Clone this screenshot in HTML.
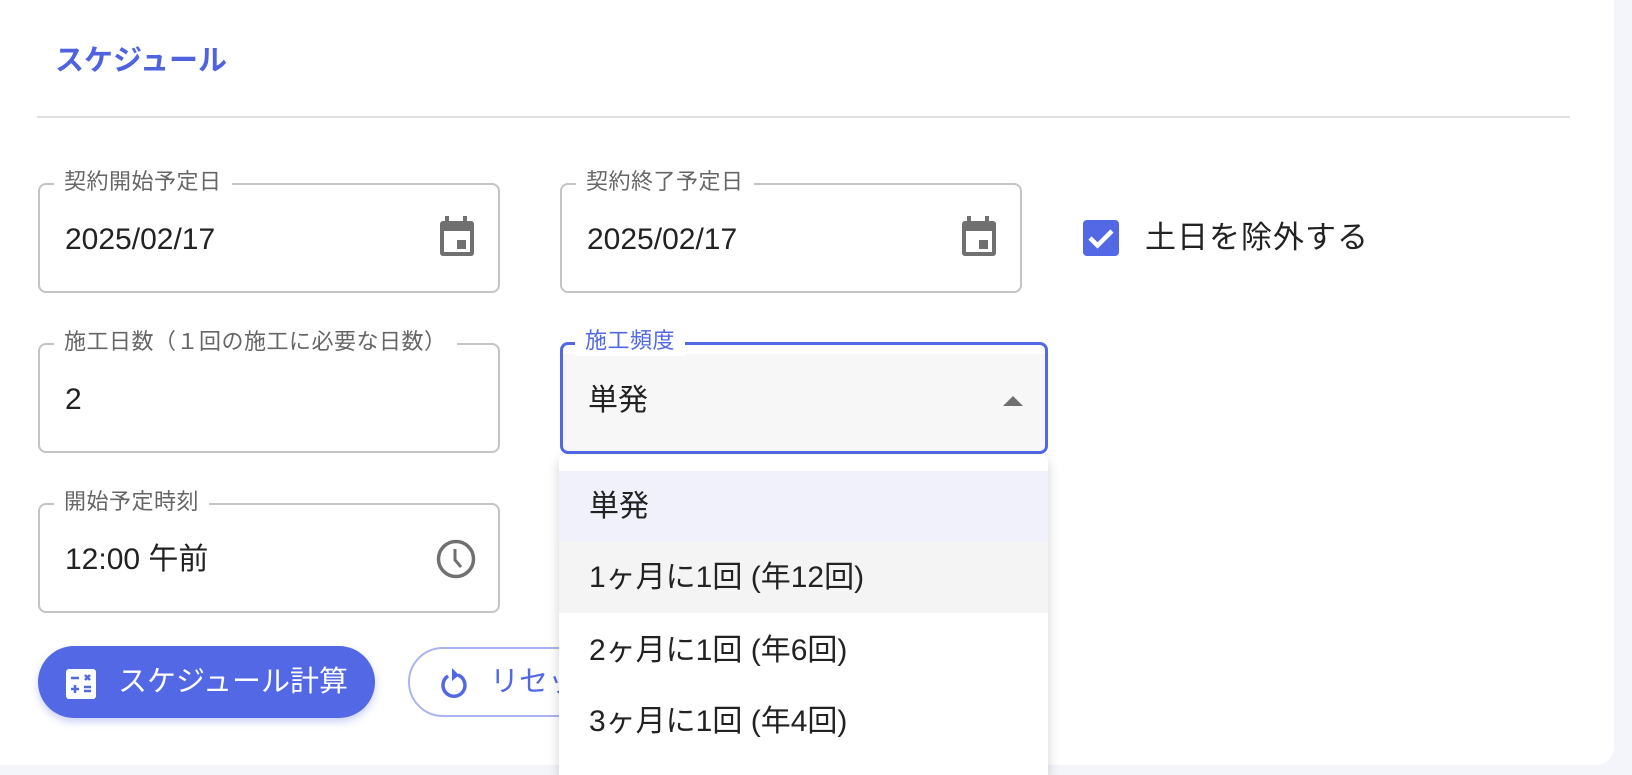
<!DOCTYPE html>
<html><head><meta charset="utf-8"><style>
*{box-sizing:border-box;margin:0;padding:0}
body{width:1632px;height:770px;background:#f3f5fb;font-family:"Liberation Sans","Noto Sans CJK JP",sans-serif;position:relative;overflow:hidden;color:#222}
.card{position:absolute;left:0;top:-20px;width:1614px;height:785px;background:#fff;border-radius:0 0 18px 0}
.abs{position:absolute}
.title{left:55px;top:37px;font-size:29px;font-weight:bold;color:#4f63e0}
.hr{left:37px;top:116px;width:1533px;height:2px;background:#e0e0e0}
.field{position:absolute;border:2px solid #c4c4c4;border-radius:8px;height:110px}
.lab{position:absolute;top:-18px;left:14px;background:#fff;padding:0 10px;font-size:22px;color:#666;line-height:30px;letter-spacing:0.5px}
.val{position:absolute;left:25px;top:37px;font-size:30px;line-height:36px;color:#222}
.item{position:absolute;left:0;width:489px;height:71px;font-size:30px;line-height:71px;padding-left:30px;color:#222}
</style></head><body>
<div class="card"></div>
<div class="abs title">スケジュール</div>
<div class="abs hr"></div>

<div class="field" style="left:38px;top:183px;width:462px"><div class="lab">契約開始予定日</div><div class="val">2025/02/17</div>
<svg class="abs" style="left:398px;top:31px" width="38" height="42" viewBox="0 0 38 42"><rect x="7" y="0" width="4" height="6" fill="#707070"/><rect x="25" y="0" width="4" height="6" fill="#707070"/><rect x="2" y="5" width="34" height="35" rx="3" fill="#707070"/><rect x="6" y="15" width="26" height="21" fill="#fff"/><rect x="19" y="24" width="9" height="9" fill="#707070"/></svg></div>

<div class="field" style="left:560px;top:183px;width:462px"><div class="lab">契約終了予定日</div><div class="val">2025/02/17</div>
<svg class="abs" style="left:398px;top:31px" width="38" height="42" viewBox="0 0 38 42"><rect x="7" y="0" width="4" height="6" fill="#707070"/><rect x="25" y="0" width="4" height="6" fill="#707070"/><rect x="2" y="5" width="34" height="35" rx="3" fill="#707070"/><rect x="6" y="15" width="26" height="21" fill="#fff"/><rect x="19" y="24" width="9" height="9" fill="#707070"/></svg></div>

<svg class="abs" style="left:1083px;top:220px" width="36" height="36" viewBox="0 0 36 36"><rect width="36" height="36" rx="4" fill="#5268e5"/><path d="M7 18 L14.5 25.5 L29 11" stroke="#fff" stroke-width="4.5" fill="none"/></svg>
<div class="abs" style="left:1145px;top:218px;font-size:31px;line-height:40px;color:#222;letter-spacing:1px">土日を除外する</div>

<div class="field" style="left:38px;top:343px;width:462px"><div class="lab">施工日数（１回の施工に必要な日数）</div><div class="val">2</div></div>

<div class="field" style="left:560px;top:342px;width:488px;height:112px;border:3px solid #5268e5;background:linear-gradient(#fff 0,#fff 9px,#f7f7f7 9px)"><div class="lab" style="color:#5268e5;top:-19px;left:12px;background:#fff">施工頻度</div><div class="val" style="top:38px">単発</div>
<svg class="abs" style="left:440px;top:50px" width="20" height="12"><path d="M0 11 L10 1 L20 11Z" fill="#707070"/></svg></div>

<div class="field" style="left:38px;top:503px;width:462px"><div class="lab">開始予定時刻</div><div class="val">12:00 午前</div>
<svg class="abs" style="left:395px;top:33px" width="42" height="42" viewBox="0 0 42 42"><circle cx="21" cy="21" r="17.5" stroke="#707070" stroke-width="3.5" fill="none"/><path d="M20 11 V22 L26 29" stroke="#707070" stroke-width="3" fill="none"/></svg></div>

<div class="abs" style="left:38px;top:646px;width:337px;height:72px;border-radius:36px;background:#5268e5;box-shadow:0 4px 8px rgba(82,104,229,.3)"></div>
<svg class="abs" style="left:66px;top:669px" width="30" height="30" viewBox="0 0 30 30"><rect width="30" height="30" rx="3" fill="#fff"/><path d="M5 9h8M19 6l5 5M24 6l-5 5M5 20h8M9 16v8M18 18h7M18 22h7" stroke="#5268e5" stroke-width="2.5"/></svg>
<div class="abs" style="left:118px;top:662px;font-size:29px;line-height:40px;color:#fff">スケジュール計算</div>

<div class="abs" style="left:408px;top:647px;width:300px;height:70px;border-radius:35px;border:2px solid #a9b4f2"></div>
<svg class="abs" style="left:438px;top:666px" width="32" height="34" viewBox="0 0 32 34"><path d="M10 10 A11 11 0 1 0 20 9" stroke="#5268e5" stroke-width="3.5" fill="none"/><path d="M14 2 L21 9 L14 15Z" fill="#5268e5"/></svg>
<div class="abs" style="left:490px;top:662px;font-size:29px;line-height:40px;color:#5268e5">リセット</div>

<div class="abs" style="left:559px;top:455px;width:489px;height:320px;background:#fff;box-shadow:0 5px 12px rgba(0,0,0,.18);border-radius:6px 6px 0 0">
<div class="item" style="top:16px;background:#f0f1fb">単発</div>
<div class="item" style="top:87px;background:#f4f4f4">1ヶ月に1回 (年12回)</div>
<div class="item" style="top:160px">2ヶ月に1回 (年6回)</div>
<div class="item" style="top:231px">3ヶ月に1回 (年4回)</div>
</div>
</body></html>
